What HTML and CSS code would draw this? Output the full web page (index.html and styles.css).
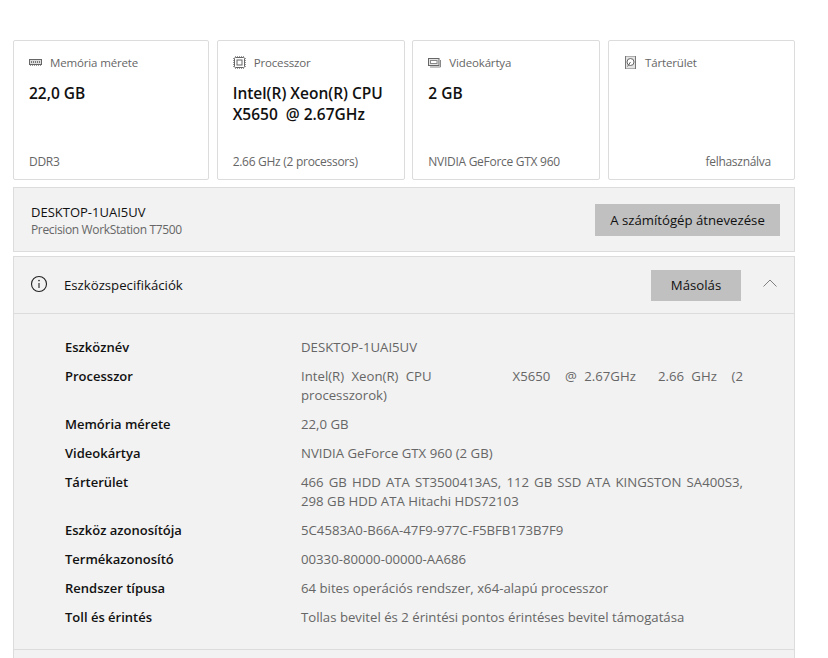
FILE: index.html
```html
<!DOCTYPE html>
<html lang="hu">
<head>
<meta charset="utf-8">
<title>Eszközspecifikációk</title>
<link rel="stylesheet" href="styles.css">
</head>
<body>
<main class="page">
  <section class="cards">
    <article class="card">
      <div class="card-head">
        <svg class="icon" viewBox="0 0 13 13"><rect x="0.500" y="3.500" width="12" height="5" fill="#ddd" stroke="#666"/><path d="M2 6h9" stroke="#777" stroke-width="2" stroke-dasharray="1 1"/><path d="M1 9.500h11" stroke="#999" stroke-dasharray="1 1"/></svg>
        <span class="card-label">Memória mérete</span>
      </div>
      <div class="card-value">22,0 GB</div>
      <div class="card-foot">DDR3</div>
    </article>
    <article class="card">
      <div class="card-head">
        <svg class="icon" viewBox="0 0 13 13"><rect x="1.500" y="1.500" width="10" height="10" rx="1" fill="none" stroke="#666"/><rect x="4" y="4" width="5" height="5" fill="none" stroke="#666"/><path d="M2 .5h9M2 12.500h9M.5 2v9M12.500 2v9" stroke="#999" stroke-dasharray="1 1"/></svg>
        <span class="card-label">Processzor</span>
      </div>
      <div class="card-value">Intel(R) Xeon(R) CPU<br>X5650&nbsp; @ 2.67GHz</div>
      <div class="card-foot">2.66 GHz (2 processors)</div>
    </article>
    <article class="card">
      <div class="card-head">
        <svg class="icon" viewBox="0 0 13 13"><rect x="0.500" y="2.500" width="10.500" height="7" fill="#e4e4e4" stroke="#666"/><rect x="2.500" y="4.500" width="6.500" height="3" fill="#fff" stroke="#888"/><path d="M12.500 4v7H2" fill="none" stroke="#888"/></svg>
        <span class="card-label">Videokártya</span>
      </div>
      <div class="card-value">2 GB</div>
      <div class="card-foot">NVIDIA GeForce GTX 960</div>
    </article>
    <article class="card">
      <div class="card-head">
        <svg class="icon" viewBox="0 0 13 13"><rect x="1.500" y="0" width="10" height="13" fill="#e4e4e4" stroke="#777"/><circle cx="6.500" cy="6" r="3.500" fill="#fff" stroke="#666"/><path d="M6.500 6 3.500 10.500" stroke="#666"/></svg>
        <span class="card-label">Tárterület</span>
      </div>
      <div class="card-value"></div>
      <div class="card-foot card-foot-end">felhasználva</div>
    </article>
  </section>

  <section class="name-box">
    <div>
      <div class="pc-name">DESKTOP-1UAI5UV</div>
      <div class="pc-model">Precision WorkStation T7500</div>
    </div>
    <button class="btn btn-rename" type="button">A számítógép átnevezése</button>
  </section>

  <section class="spec">
    <header class="spec-head">
      <svg class="info" viewBox="0 0 18 18"><circle cx="9" cy="9" r="7.500" fill="none" stroke="#222" stroke-width="1.100"/><path d="M9 8v5" stroke="#222" stroke-width="1.100"/><circle cx="9" cy="5.600" r=".8" fill="#222"/></svg>
      <h2 class="spec-title">Eszközspecifikációk</h2>
      <button class="btn btn-copy" type="button">Másolás</button>
      <svg class="chevron" viewBox="0 0 14 8"><path d="M.5 7.500 7 1l6.500 6.500" fill="none" stroke="#808080"/></svg>
    </header>
    <dl class="spec-list">
      <div class="row"><dt>Eszköznév</dt><dd>DESKTOP-1UAI5UV</dd></div>
      <div class="row"><dt>Processzor</dt><dd class="just">Intel(R) Xeon(R) CPU           X5650  @ 2.67GHz   2.66 GHz  (2 processzorok)</dd></div>
      <div class="row"><dt>Memória mérete</dt><dd>22,0 GB</dd></div>
      <div class="row"><dt>Videokártya</dt><dd>NVIDIA GeForce GTX 960 (2 GB)</dd></div>
      <div class="row"><dt>Tárterület</dt><dd class="justify">466 GB HDD ATA ST3500413AS, 112 GB SSD ATA KINGSTON SA400S3, 298 GB HDD ATA Hitachi HDS72103</dd></div>
      <div class="row"><dt>Eszköz azonosítója</dt><dd>5C4583A0-B66A-47F9-977C-F5BFB173B7F9</dd></div>
      <div class="row"><dt>Termékazonosító</dt><dd>00330-80000-00000-AA686</dd></div>
      <div class="row"><dt>Rendszer típusa</dt><dd>64 bites operációs rendszer, x64-alapú processzor</dd></div>
      <div class="row"><dt>Toll és érintés</dt><dd>Tollas bevitel és 2 érintési pontos érintéses bevitel támogatása</dd></div>
    </dl>
  </section>
  <section class="next-panel"></section>
</main>
</body>
</html>
```

FILE: styles.css
```css
* { box-sizing: border-box; }
html, body { margin: 0; height: 658px; overflow: hidden; background: #fff; }
body { font-family: "Open Sans", "Noto Sans", sans-serif; font-size: 13px; color: #111; }
.page { padding: 40px 33px 0 13px; display: flex; flex-direction: column; }
.cards { display: grid; grid-template-columns: 196px 188px 188px 187px; column-gap: 7.67px; height: 140px; }
.card { border: 1px solid #dcdcdc; border-radius: 2px; background: #fff; padding: 12px 15px 8px; display: flex; flex-direction: column; }
.card-head { display: flex; align-items: center; gap: 8px; height: 18px; }
.icon { width: 13px; height: 13px; flex: none; }
.card-label { font-size: 11.5px; color: #666; letter-spacing: -.15px; }
.card-value { font-size: 15.5px; font-weight: 600; line-height: 21px; margin-top: 12px; flex: 1; color: #111; }
.card-foot { font-size: 12px; color: #666; line-height: 18px; letter-spacing: -.28px; }
.card-foot-end { text-align: right; padding-right: 8px; }
.name-box { margin-top: 7px; height: 65px; border: 1px solid #dcdcdc; background: #f2f2f2; display: flex; align-items: center; justify-content: space-between; padding: 0 14px 0 17px; }
.pc-name { font-size: 13px; line-height: 17px; color: #111; margin-top: 3px; }
.pc-model { font-size: 12px; line-height: 18px; margin-top: 0; color: #666; letter-spacing: -.35px; }
.btn { border: 0; background: #c0c0c0; font: inherit; font-size: 13.2px; color: #111; padding: 0; }
.btn-rename { width: 185px; height: 32px; }
.btn-copy { width: 90px; height: 31px; margin-left: auto; }
.spec { margin-top: 4px; height: 394px; border: 1px solid #dcdcdc; background: #f2f2f2; flex: none; }
.spec-head { height: 57px; border-bottom: 1px solid #dcdcdc; display: flex; align-items: center; padding: 0 17px 0 16px; }
.info { width: 18px; height: 18px; flex: none; margin-top: -3px; }
.spec-title { margin: 0 0 0 16px; font-size: 13.2px; font-weight: 400; }
.chevron { width: 14px; height: 8px; margin: -5px 0 0 22px; flex: none; }
.spec-list { margin: 0; padding: 24px 51px 0 51px; display: flex; flex-direction: column; gap: 10px; }
.row { display: grid; grid-template-columns: 236px 442px; line-height: 19px; }
dt { font-weight: 600; color: #111; }
dd { margin: 0; color: #666; font-size: 13.2px; }
.just { white-space: pre-wrap; text-align: justify; }
.justify { text-align: justify; }
.next-panel { height: 20px; flex: none; background: #f2f2f2; border: 1px solid #dcdcdc; border-top: 0; }
```
